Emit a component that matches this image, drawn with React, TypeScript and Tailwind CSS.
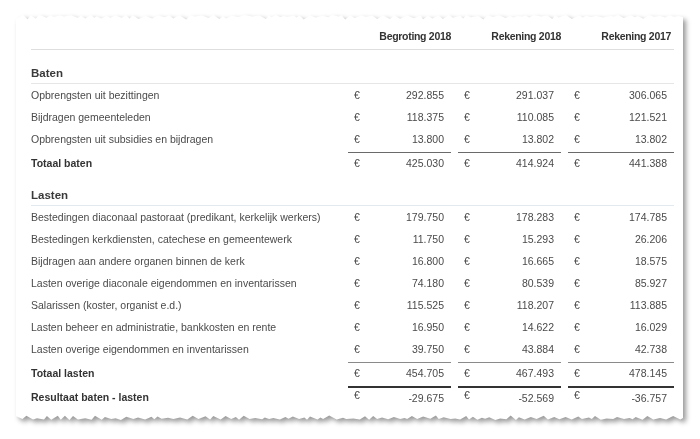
import React from 'react';

type Row = { label: string; values: [string, string, string] };

const baten: Row[] = [
  { label: 'Opbrengsten uit bezittingen', values: ['292.855', '291.037', '306.065'] },
  { label: 'Bijdragen gemeenteleden', values: ['118.375', '110.085', '121.521'] },
  { label: 'Opbrengsten uit subsidies en bijdragen', values: ['13.800', '13.802', '13.802'] },
];

const lasten: Row[] = [
  { label: 'Bestedingen diaconaal pastoraat (predikant, kerkelijk werkers)', values: ['179.750', '178.283', '174.785'] },
  { label: 'Bestedingen kerkdiensten, catechese en gemeentewerk', values: ['11.750', '15.293', '26.206'] },
  { label: 'Bijdragen aan andere organen binnen de kerk', values: ['16.800', '16.665', '18.575'] },
  { label: 'Lasten overige diaconale eigendommen en inventarissen', values: ['74.180', '80.539', '85.927'] },
  { label: 'Salarissen (koster, organist e.d.)', values: ['115.525', '118.207', '113.885'] },
  { label: 'Lasten beheer en administratie, bankkosten en rente', values: ['16.950', '14.622', '16.029'] },
  { label: 'Lasten overige eigendommen en inventarissen', values: ['39.750', '43.884', '42.738'] },
];

const PAPER_W = 667;

// torn paper edge, drawn as a polygon
function tornEdge(seed: number, h: number, bottom: boolean) {
  let s = seed;
  const rand = () => {
    s = (s * 9301 + 49297) % 233280;
    return s / 233280;
  };
  const pts: string[] = [];
  let x = 0;
  let i = 0;
  while (x < PAPER_W) {
    const y = i % 2 ? rand() * 1.2 : 1.5 + rand() * 3;
    pts.push(`${x.toFixed(1)},${(bottom ? h - y : y).toFixed(1)}`);
    x += 2.5 + rand() * 5;
    i++;
  }
  pts.push(`${PAPER_W},${bottom ? h - 2 : 2}`);
  const base = bottom ? 0 : h;
  return `0,${base} ${pts.join(' ')} ${PAPER_W},${base}`;
}

const groupW = ['w-[103px]', 'w-[103px]', 'w-[106px]'];

function DataRow({ row }: { row: Row }) {
  return (
    <div className="flex h-[22px] items-center leading-[22px]">
      <div className="w-[317px]">{row.label}</div>
      <div className="flex">
        {row.values.map((v, i) => (
          <div key={i} className={`${groupW[i]} ${i > 0 ? 'ml-[7px]' : ''} flex justify-between pl-[6px] pr-[7px]`}>
            <span>€</span>
            <span>{v}</span>
          </div>
        ))}
      </div>
    </div>
  );
}

function TotalRow({
  label,
  values,
  border,
  spacing,
  euro = '',
}: {
  label: string;
  values: [string, string, string];
  border: string;
  spacing: string;
  euro?: string;
}) {
  return (
    <div className={`flex ${spacing}`}>
      <div className="w-[317px] font-bold text-[#333] leading-[18px] pt-[2px]">{label}</div>
      <div className="flex">
        {values.map((v, i) => (
          <div
            key={i}
            className={`${groupW[i]} ${i > 0 ? 'ml-[7px]' : ''} flex justify-between leading-[18px] pt-[1px] pl-[6px] pr-[7px] ${border}`}
          >
            <span className={euro}>€</span>
            <span>{v}</span>
          </div>
        ))}
      </div>
    </div>
  );
}

function SectionHead({ title, line }: { title: string; line: string }) {
  return (
    <div className={`h-[34px] flex items-end pb-[2px] border-b ${line} text-[11.5px] font-bold text-[#3a3a3a] leading-[16px]`}>
      {title}
    </div>
  );
}

export default function App() {
  return (
    <div className="w-[700px] h-[439px] bg-white pl-[16px] pt-[15px] font-['Liberation_Sans',Arial,sans-serif] text-[10.5px] text-[#4a4a4a]">
      <div className="w-[667px] drop-shadow-[3px_3px_2.5px_rgba(0,0,0,0.4)]">
        <svg width={PAPER_W} height={6} className="block">
          <polygon points={tornEdge(17, 6, false)} fill="#fff" />
        </svg>
        <div className="bg-white pl-[15px] pr-[9px] pb-[5px]">
          {/* column headers */}
          <div className="flex h-[29px] items-center pt-[2px] border-b border-[#dedede] font-bold text-[#333] leading-[14px] tracking-[-0.3px]">
            <div className="w-[317px]" />
            <div className="w-[103px] text-right">Begroting 2018</div>
            <div className="w-[103px] ml-[7px] text-right">Rekening 2018</div>
            <div className="w-[106px] ml-[7px] text-right pr-[3px]">Rekening 2017</div>
          </div>

          <SectionHead title="Baten" line="border-[#e6e6e6]" />
          {baten.map((r) => (
            <DataRow key={r.label} row={r} />
          ))}
          <TotalRow
            label="Totaal baten"
            values={['425.030', '414.924', '441.388']}
            border="border-t border-[#6a6a6a]"
            spacing="mt-[2px]"
          />

          <SectionHead title="Lasten" line="border-[#e2e9ef]" />
          {lasten.map((r) => (
            <DataRow key={r.label} row={r} />
          ))}
          <TotalRow
            label="Totaal lasten"
            values={['454.705', '467.493', '478.145']}
            border="border-t border-[#8a8a8a]"
            spacing="mt-[2px]"
          />
          <TotalRow
            label="Resultaat baten - lasten"
            values={['-29.675', '-52.569', '-36.757']}
            border="border-t-2 border-[#333]"
            spacing="mt-[4px]"
            euro="-translate-y-[3px]"
          />
        </div>
        <svg width={PAPER_W} height={8} className="block">
          <polygon points={tornEdge(91, 8, true)} fill="#fff" />
        </svg>
      </div>
    </div>
  );
}
